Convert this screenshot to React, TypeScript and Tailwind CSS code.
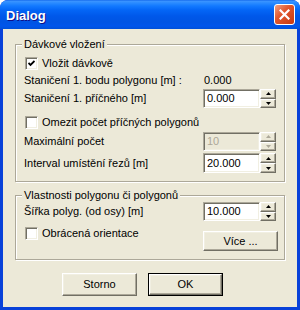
import React from 'react';

// classic 3D bevels used by the dialog controls
const raised =
  'border border-t-white border-l-white border-r-[#716F64] border-b-[#716F64] shadow-[inset_-1px_-1px_0_#ACA899,inset_1px_1px_0_#F1EFE2] bg-[#ECE9D8]';
const sunken =
  'border border-t-[#ACA899] border-l-[#ACA899] border-b-white border-r-white shadow-[inset_1px_1px_0_#716F64,inset_-1px_-1px_0_#F1EFE2]';

function Arrow({ up, disabled }: { up?: boolean; disabled?: boolean }) {
  return (
    <svg width="5" height="3" viewBox="0 0 5 3" className="block">
      <path d={up ? 'M2.5 0 L5 3 L0 3 Z' : 'M0 0 L5 0 L2.5 3 Z'} fill={disabled ? '#ACA899' : '#000'} />
    </svg>
  );
}

function Spin({ disabled }: { disabled?: boolean }) {
  return (
    <div className="w-[16px] h-full flex flex-col">
      <div className={`${raised} flex-1 flex items-center justify-center`}>
        <Arrow up disabled={disabled} />
      </div>
      <div className={`${raised} flex-1 flex items-center justify-center`}>
        <Arrow disabled={disabled} />
      </div>
    </div>
  );
}

function NumInput({ value, disabled, h = 'h-[19px]' }: { value: string; disabled?: boolean; h?: string }) {
  return (
    <div className={`flex ${h}`}>
      <div
        className={`${sunken} w-[57px] h-full flex items-center pl-[3px] text-[11px] ${
          disabled ? 'bg-[#ECE9D8] text-[#ACA899]' : 'bg-white text-black'
        }`}
      >
        {value}
      </div>
      <Spin disabled={disabled} />
    </div>
  );
}

function Check({ checked, label }: { checked?: boolean; label: string }) {
  return (
    <div className="flex items-center h-[13px] ml-[1px]">
      <div className={`${sunken} w-[13px] h-[13px] bg-white flex items-center justify-center`}>
        {checked && (
          <svg width="7" height="7" viewBox="0 0 7 7">
            <path d="M0.5 3 L2.5 5 L6.5 1" stroke="#000" strokeWidth="1.8" fill="none" />
          </svg>
        )}
      </div>
      <span className="ml-[4px] text-[11px] leading-[13px] whitespace-nowrap">{label}</span>
    </div>
  );
}

function Group({ title, className, children }: { title: string; className?: string; children: React.ReactNode }) {
  return (
    <div
      className={`relative mx-[12px] border border-[#ACA899] shadow-[inset_1px_1px_0_white,1px_1px_0_white] pl-[8px] ${className ?? ''}`}
    >
      <span className="absolute left-[6px] -top-[8px] px-[2px] bg-[#ECE9D8] text-[11px] leading-[14px] whitespace-nowrap">
        {title}
      </span>
      {children}
    </div>
  );
}

function Button({ label, isDefault }: { label: string; isDefault?: boolean }) {
  if (isDefault) {
    return (
      <div className="w-[75px] h-[23px] border border-black">
        <div className={`${raised} w-full h-full flex items-center justify-center text-[11px]`}>{label}</div>
      </div>
    );
  }
  return <div className={`${raised} w-[75px] h-[23px] flex items-center justify-center text-[11px]`}>{label}</div>;
}

function Label({ children }: { children: React.ReactNode }) {
  return <span className="w-[179px] shrink-0 text-[11px] leading-[13px] whitespace-nowrap">{children}</span>;
}

export default function App() {
  return (
    <div className="w-[300px] h-[310px] flex flex-col rounded-t-[8px] overflow-hidden bg-[#0831D9] font-['Liberation_Sans',Arial,sans-serif] text-black select-none">
      {/* Title bar */}
      <div className="h-[29px] shrink-0 flex items-center justify-between pl-[6px] pr-[5px] bg-[linear-gradient(to_bottom,#0A5FE7_0px,#3D95FF_1px,#2A8BFF_3px,#1279FF_6px,#0466F6_10px,#0058EA_16px,#0054E3_22px,#0055EB_26px,#0050D8_29px)]">
        <span className="pt-[3px] text-white font-bold text-[13px] [text-shadow:1px_1px_0_#0F1089]">Dialog</span>
        <div className="w-[21px] h-[21px] rounded-[3px] border border-white bg-[linear-gradient(135deg,#F0A184_0%,#E2582F_40%,#C63810_100%)] flex items-center justify-center">
          <svg width="11" height="11" viewBox="0 0 11 11">
            <path d="M1.5 1.5 L9.5 9.5 M9.5 1.5 L1.5 9.5" stroke="#fff" strokeWidth="2.2" strokeLinecap="square" />
          </svg>
        </div>
      </div>

      {/* Client area */}
      <div className="flex-1 flex flex-col bg-[#ECE9D8] border-x-[3px] border-b-[3px] border-[#0841D9] pt-[15px]">
        <Group title="Dávkové vložení" className="h-[138px] pt-[12px]">
          <Check checked label="Vložit dávkově" />
          <div className="mt-[3px] h-[14px] flex items-center">
            <Label>Staničení 1. bodu polygonu [m] :</Label>
            <span className="text-[11px] ml-[1px]">0.000</span>
          </div>
          <div className="mt-[2px] flex items-center">
            <Label>Staničení 1. příčného [m]</Label>
            <NumInput value="0.000" />
          </div>
          <div className="mt-[8px]">
            <Check label="Omezit počet příčných polygonů" />
          </div>
          <div className="mt-[3px] flex items-center">
            <Label>Maximální počet</Label>
            <NumInput value="10" disabled />
          </div>
          <div className="mt-[2px] flex items-center">
            <Label>Interval umístění řezů [m]</Label>
            <NumInput value="20.000" h="h-[20px]" />
          </div>
        </Group>

        <Group title="Vlastnosti polygonu či polygonů" className="mt-[13px] h-[65px] pt-[6px]">
          <div className="flex items-center">
            <Label>Šířka polyg. (od osy) [m]</Label>
            <NumInput value="10.000" />
          </div>
          <div className="mt-[6px] flex items-start">
            <div className="w-[179px]">
              <Check label="Obrácená orientace" />
            </div>
            <div className={`${raised} mt-[4px] w-[75px] h-[20px] flex items-center justify-center text-[11px]`}>
              Více ...
            </div>
          </div>
        </Group>

        <div className="mt-[13px] pl-[59px] flex gap-[11px]">
          <Button label="Storno" />
          <Button label="OK" isDefault />
        </div>
      </div>
    </div>
  );
}
